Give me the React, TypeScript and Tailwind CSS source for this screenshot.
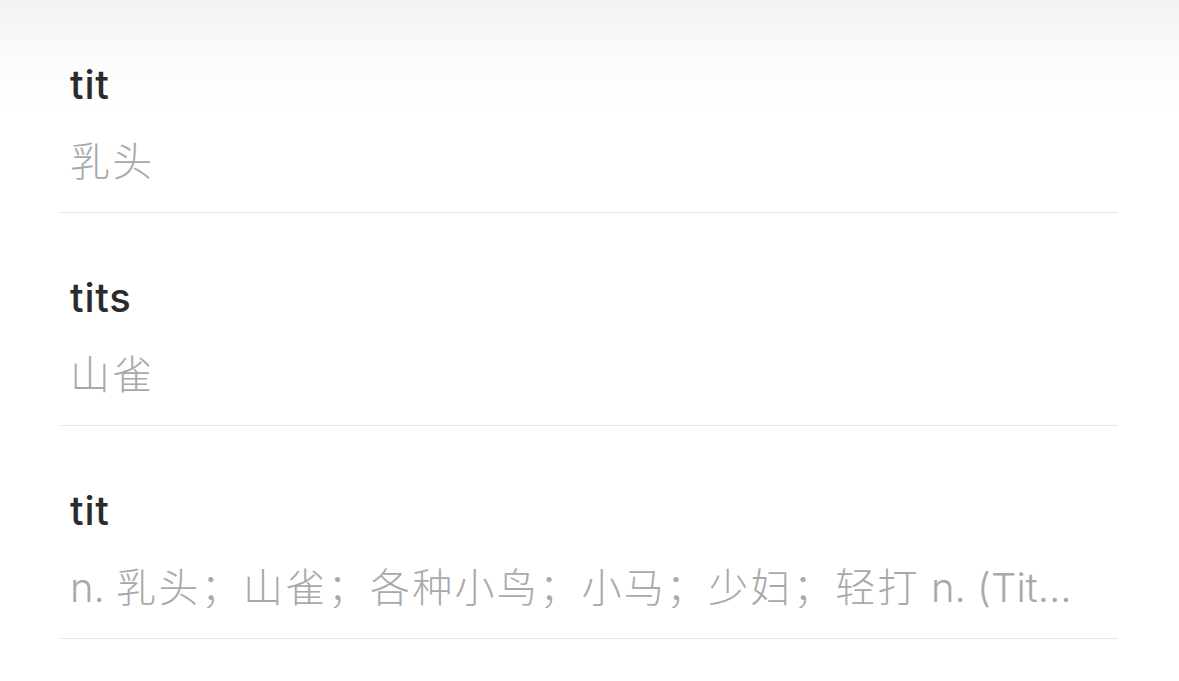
import React from "react";

interface Entry {
    word: string;
    meaning: string;
}

const entries: Entry[] = [
    { word: "tit", meaning: "乳头" },
    { word: "tits", meaning: "山雀" },
    { word: "tit", meaning: "n. 乳头；山雀；各种小鸟；小马；少妇；轻打 n. (Tit) 人名；(英) 蒂特" },
];

// CJK runs get a bit of extra spacing, latin runs stay tight
function Meaning({ text }: { text: string }) {
    const parts = text.split(/([\u3000-\u9fff\uff00-\uffef]+)/);
    return (
        <>
            {parts.map((part, i) =>
                /[\u3000-\u9fff\uff00-\uffef]/.test(part) ? (
                    <span key={i} className="tracking-[2.3px]">{part}</span>
                ) : (
                    <span key={i}>{part}</span>
                )
            )}
        </>
    );
}

export default function App() {
    return (
        <div
            className="min-h-[681px] w-full bg-[linear-gradient(to_bottom,#f2f2f2_0px,#fbfbfb_60px,#ffffff_110px)]"
            style={{ fontFamily: 'Inter, "Noto Sans CJK SC", sans-serif' }}
        >
            <div className="mx-[60px] mr-[61px]">
                {entries.map((entry, i) => (
                    <div key={i} className="border-b border-[#e6e6e6] px-[10px] pt-[61px] pb-[30px]">
                        <div className="h-[48px] overflow-hidden text-[40px] leading-[48px] font-medium tracking-[0.8px] text-[#2b2b2e]">
                            {entry.word}
                        </div>
                        <div className="mt-[33px] mr-[36px] h-[40px] truncate text-[40px] leading-[40px] font-light text-[#a9a9ab]">
                            <Meaning text={entry.meaning} />
                        </div>
                    </div>
                ))}
            </div>
        </div>
    );
}
